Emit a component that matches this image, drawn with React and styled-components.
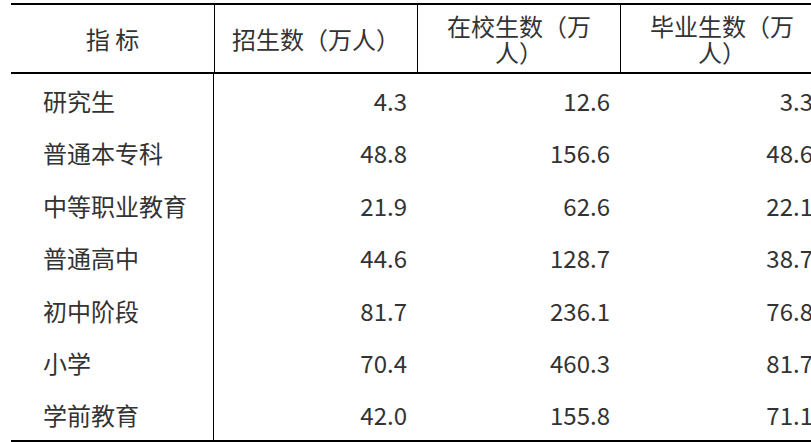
import React from "react";
import styled, { createGlobalStyle } from "styled-components";

const GlobalStyle = createGlobalStyle`
  html, body { margin: 0; padding: 0; background: #fff; overflow: hidden; }
  body { font-family: "Noto Sans CJK SC", "Noto Sans", sans-serif; color: #333; }
`;

const Page = styled.div`
  padding: 3px 0 0 11px;
  width: 900px;
`;

const Grid = styled.div`
  display: grid;
  grid-template-columns: repeat(4, 203px);
  grid-template-rows: 71px repeat(7, 52.5px);
  font-size: 24px;
  color: #333;
  text-spacing-trim: space-all;
`;

const HeadCell = styled.div`
  box-sizing: border-box;
  display: flex;
  align-items: center;
  justify-content: center;
  text-align: center;
  padding: 0 10px;
  line-height: 26px;
  border-top: 2px solid #000;
  border-bottom: 2px solid #000;
  border-left: ${(p) => (p.$first ? "none" : "1.5px solid #000")};
`;

const Cell = styled.div`
  box-sizing: border-box;
  display: flex;
  align-items: center;
  justify-content: ${(p) => (p.$label ? "flex-start" : "flex-end")};
  padding: ${(p) => (p.$label ? "0 0 0 32px" : "0 10px 0 0")};
  border-right: ${(p) => (p.$label ? "1.5px solid #000" : "none")};
  border-bottom: ${(p) => (p.$last ? "2px solid #000" : "none")};
  white-space: nowrap;
`;

const headers = ["指 标", "招生数（万人）", "在校生数（万人）", "毕业生数（万人）"];

const rows = [
  ["研究生", "4.3", "12.6", "3.3"],
  ["普通本专科", "48.8", "156.6", "48.6"],
  ["中等职业教育", "21.9", "62.6", "22.1"],
  ["普通高中", "44.6", "128.7", "38.7"],
  ["初中阶段", "81.7", "236.1", "76.8"],
  ["小学", "70.4", "460.3", "81.7"],
  ["学前教育", "42.0", "155.8", "71.1"],
];

export default function App() {
  return (
    <>
      <GlobalStyle />
      <Page>
        <Grid>
          {headers.map((h, i) => (
            <HeadCell key={h} $first={i === 0}>
              {h}
            </HeadCell>
          ))}
          {rows.map((r, ri) =>
            r.map((v, ci) => (
              <Cell
                key={`${ri}-${ci}`}
                $label={ci === 0}
                $last={ri === rows.length - 1}
              >
                {v}
              </Cell>
            ))
          )}
        </Grid>
      </Page>
    </>
  );
}
